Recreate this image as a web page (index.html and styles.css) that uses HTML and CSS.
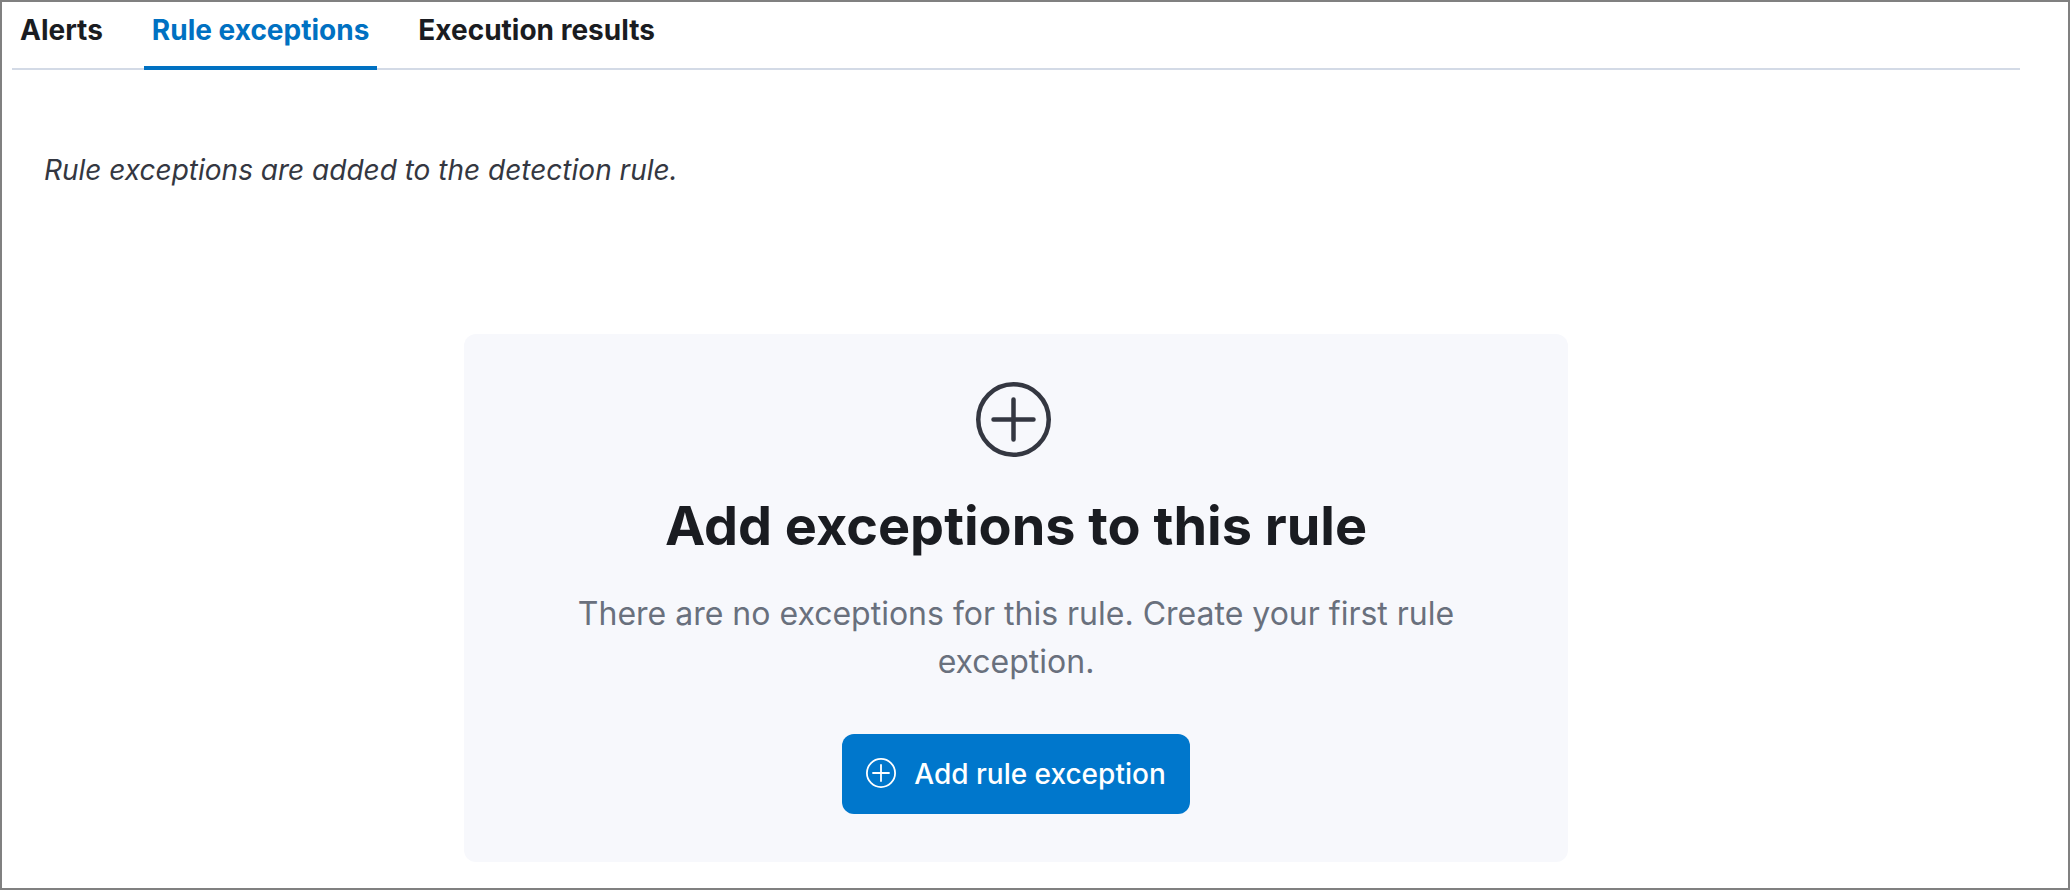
FILE: index.html
```html
<!DOCTYPE html>
<html lang="en">
  <head>
    <meta charset="UTF-8" />
    <meta name="viewport" content="width=device-width, initial-scale=1.0" />
    <title>Rule exceptions</title>
    <link rel="stylesheet" href="styles.css">
  </head>
  <body>
    <!-- Tabs -->
    <nav class="tabs">
      <a href="#" class="tab">Alerts</a>
      <a href="#" class="tab active">Rule exceptions</a>
      <a href="#" class="tab">Execution results</a>
    </nav>

    <main>
      <p class="description">Rule exceptions are added to the detection rule.</p>

      <!-- Empty state -->
      <section class="empty-prompt">
        <svg class="prompt-icon" viewBox="0 0 16 16" aria-hidden="true">
          <circle cx="7.5" cy="7.5" r="7.05" />
          <path d="M7.5 3.5v8M3.5 7.5h8" />
        </svg>
        <h2>Add exceptions to this rule</h2>
        <p>There are no exceptions for this rule. Create your first rule exception.</p>
        <button type="button" class="add-btn">
          <svg class="btn-icon" viewBox="0 0 16 16" aria-hidden="true">
            <circle cx="7.5" cy="7.5" r="7.05" />
            <path d="M7.5 3.5v8M3.5 7.5h8" />
          </svg>
          Add rule exception
        </button>
      </section>
    </main>
  </body>
</html>
```
FILE: styles.css
```css
* {
  margin: 0;
  padding: 0;
  box-sizing: border-box;
}

body {
  min-height: 100vh;
  padding: 0 48px 24px 10px;
  border: 2px solid #808080;
  background-color: #fff;
  color: #343741;
  font-family: Inter, "Liberation Sans", sans-serif;
  font-size: 28px;
}

/* Tabs */
.tabs {
  display: flex;
  gap: 33px;
  box-shadow: inset 0 -2px 0 #d3dae6;
}

.tab {
  padding: 10px 8px 18px;
  border-bottom: 4px solid transparent;
  color: #1a1c21;
  font-weight: 700;
  line-height: 36px;
  text-decoration: none;
}

.tab.active {
  color: #0071c2;
  border-bottom-color: #0071c2;
}

/* Content */
main {
  padding: 76px 32px 0;
}

.description {
  font-style: italic;
  line-height: 48px;
}

/* Empty state */
.empty-prompt {
  display: flex;
  flex-direction: column;
  align-items: center;
  max-width: 1104px;
  margin: 140px auto 0;
  padding: 48px;
  border-radius: 12px;
  background-color: #f7f8fc;
  text-align: center;
}

.empty-prompt svg {
  fill: none;
  stroke: currentColor;
  stroke-width: 0.9;
  stroke-linecap: round;
}

.prompt-icon {
  width: 80px;
  height: 80px;
}

.empty-prompt h2 {
  margin-top: 32px;
  color: #1a1c21;
  font-size: 54px;
  font-weight: 750;
  line-height: 64px;
}

.empty-prompt p {
  max-width: 912px;
  margin: 32px 0 48px;
  color: #69707d;
  font-size: 32px;
  line-height: 48px;
}

.add-btn {
  display: flex;
  align-items: center;
  gap: 16px;
  height: 80px;
  padding: 0 24px;
  border: none;
  border-radius: 12px;
  background-color: #0077cc;
  color: #fff;
  font-family: inherit;
  font-size: 28px;
  font-weight: 500;
  cursor: pointer;
}

.btn-icon {
  width: 32px;
  height: 32px;
}
```
